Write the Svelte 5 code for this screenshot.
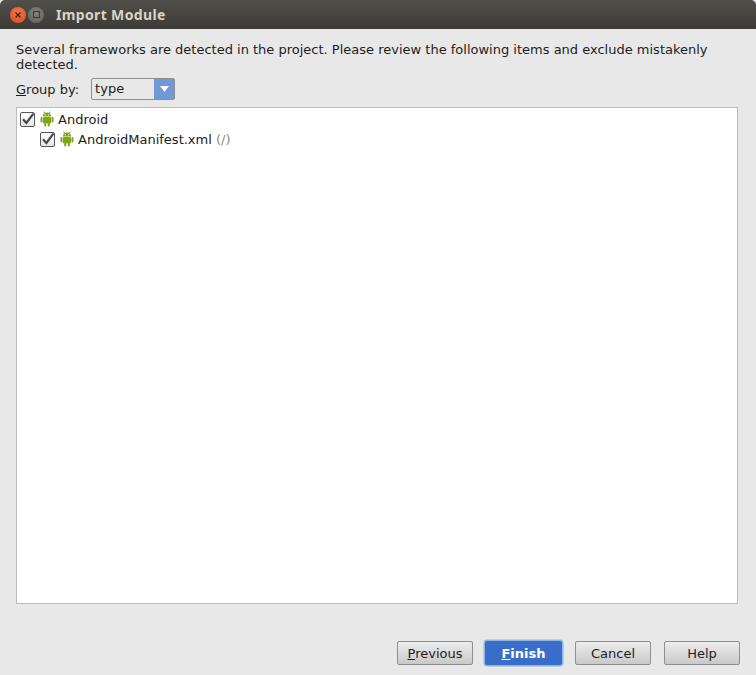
<script>
  const buttons = [
    { label: 'Previous', mnemonic: 'P', rest: 'revious' },
    { label: 'Finish', mnemonic: 'F', rest: 'inish', primary: true },
    { label: 'Cancel', rest: 'Cancel' },
    { label: 'Help', rest: 'Help' }
  ];
</script>

{#snippet android()}
  <svg class="droid" width="14" height="16" viewBox="0 0 14 16" aria-hidden="true">
    <path d="M3 5.5a4 4 0 0 1 8 0z" fill="#7fa51c" />
    <path d="M4.6 2 3.7.6M9.4 2l.9-1.4" stroke="#7fa51c" stroke-width="1" fill="none" />
    <rect x="3" y="6" width="8" height="6.5" rx="1" fill="#7fa51c" />
    <rect x="0.5" y="6" width="2" height="5.5" rx="1" fill="#7fa51c" />
    <rect x="11.5" y="6" width="2" height="5.5" rx="1" fill="#7fa51c" />
    <rect x="4.2" y="12" width="2" height="3.5" rx="1" fill="#7fa51c" />
    <rect x="7.8" y="12" width="2" height="3.5" rx="1" fill="#7fa51c" />
    <circle cx="5.4" cy="3.8" r=".6" fill="#fff" />
    <circle cx="8.6" cy="3.8" r=".6" fill="#fff" />
  </svg>
{/snippet}

{#snippet check()}
  <span class="check">
    <svg width="15" height="15" viewBox="0 0 15 15" aria-hidden="true">
      <path d="M3 7.2 6.4 11 13.4 1.6" stroke="#4a4a4a" stroke-width="2.2" fill="none" />
    </svg>
  </span>
{/snippet}

<div class="window">
  <header class="titlebar">
    <div class="controls">
      <span class="close">
        <svg width="8" height="8" viewBox="0 0 8 8" aria-hidden="true">
          <path d="M1.5 1.5l5 5M6.5 1.5l-5 5" stroke="#43200f" stroke-width="1.3" />
        </svg>
      </span>
      <span class="maximize"><i></i></span>
    </div>
    <span class="title">Import Module</span>
  </header>

  <main class="content">
    <p class="intro">Several frameworks are detected in the project. Please review the following items and exclude mistakenly detected.</p>

    <div class="group">
      <span class="group-label"><u>G</u>roup by:</span>
      <div class="select">
        <span class="select-value">type</span>
        <span class="select-arrow">
          <svg width="9" height="6" viewBox="0 0 9 6" aria-hidden="true"><path d="M0 0h9L4.5 6z" fill="#fff" /></svg>
        </span>
      </div>
    </div>

    <div class="tree">
      <div class="row">
        {@render check()}
        {@render android()}
        <span>Android</span>
      </div>
      <div class="row nested">
        {@render check()}
        {@render android()}
        <span>AndroidManifest.xml <em>(/)</em></span>
      </div>
    </div>

    <footer class="actions">
      {#each buttons as button}
        <button class="btn" class:primary={button.primary} aria-label={button.label}>
          {#if button.mnemonic}<u>{button.mnemonic}</u>{/if}{button.rest}
        </button>
      {/each}
    </footer>
  </main>
</div>

<style>
  :global(body) {
    background: #e8e8e8;
  }

  .window {
    display: flex;
    flex-direction: column;
    width: 756px;
    height: 675px;
    overflow: hidden;
    background: #e8e8e8;
    color: #1d1d1d;
    font-family: "DejaVu Sans", sans-serif;
    font-size: 13px;
  }

  .titlebar {
    display: flex;
    align-items: center;
    flex: none;
    height: 29px;
    padding-left: 10px;
    border-radius: 5px 5px 0 0;
    background: linear-gradient(#514f4a, #3c3b37);
  }

  .controls {
    display: flex;
    gap: 2px;
    width: 46px;
  }

  .close,
  .maximize {
    display: flex;
    align-items: center;
    justify-content: center;
    width: 16px;
    height: 16px;
    border-radius: 50%;
  }

  .close {
    background: radial-gradient(circle at 50% 35%, #f4774a, #dd4a1c);
  }

  .maximize {
    background: radial-gradient(circle at 50% 35%, #7f7e79, #62615c);
  }

  .maximize i {
    width: 5px;
    height: 5px;
    border: 1.5px solid #3b3a36;
  }

  .title {
    color: #d8d4c8;
    font-family: "Noto Sans", sans-serif;
    font-size: 14px;
    font-weight: 700;
    letter-spacing: 0.35px;
  }

  .content {
    display: flex;
    flex: 1;
    flex-direction: column;
    min-height: 0;
    padding: 13px 16px 10px 16px;
  }

  .intro {
    margin: 0;
    line-height: 15px;
  }

  .group {
    display: flex;
    align-items: center;
    gap: 12px;
    height: 22px;
    margin-top: 6px;
  }

  .select {
    display: flex;
    box-sizing: border-box;
    width: 84px;
    height: 22px;
    border: 1px solid #8f8f8f;
    border-radius: 2px;
  }

  .select-value {
    flex: 1;
    padding-left: 3px;
    line-height: 19px;
  }

  .select-arrow {
    display: flex;
    align-items: center;
    justify-content: center;
    width: 20px;
    background: #6f9ad6;
  }

  .tree {
    box-sizing: border-box;
    flex: none;
    width: 722px;
    height: 497px;
    margin-top: 7px;
    padding-top: 1px;
    border: 1px solid #bcbcbc;
    background: #fff;
  }

  .row {
    display: flex;
    align-items: center;
    gap: 4px;
    height: 20px;
    padding-left: 3px;
  }

  .nested {
    padding-left: 23px;
  }

  .row em {
    color: #8c8c7c;
    font-style: normal;
  }

  .check {
    display: block;
    box-sizing: border-box;
    width: 15px;
    height: 15px;
    border: 1px solid #555;
    border-radius: 2px;
    background: linear-gradient(#fff, #e6e6e6);
  }

  .check svg {
    display: block;
    margin: -1px;
  }

  .droid {
    flex: none;
    margin-left: 1px;
  }

  .actions {
    display: flex;
    justify-content: flex-end;
    gap: 13px;
    margin-top: auto;
    padding-right: -2px;
  }

  .btn {
    box-sizing: border-box;
    width: 76px;
    height: 24px;
    padding: 0;
    border: 1px solid #8f8f8f;
    border-radius: 2px;
    background: linear-gradient(#ededed, #c9c9c9);
    color: #1d1d1d;
    font: inherit;
  }

  .primary {
    width: 77px;
    margin: 0 0 0 -1px;
    border-color: #3a6fc4;
    background: #386ec8;
    box-shadow: 0 0 0 1.5px #8fb4e4;
    color: #fff;
    font-weight: 700;
  }
</style>
